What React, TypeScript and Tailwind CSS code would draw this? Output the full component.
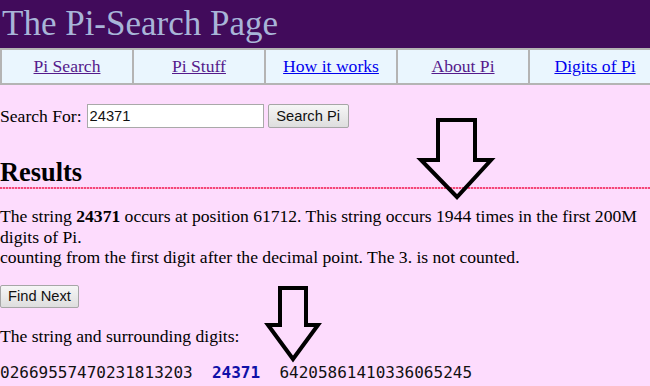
import React from 'react';

const NAV = [
  { label: 'Pi Search', visited: true },
  { label: 'Pi Stuff', visited: true },
  { label: 'How it works', visited: false },
  { label: 'About Pi', visited: true },
  { label: 'Digits of Pi', visited: false },
];

function DownArrow({ points }: { points: string }) {
  return (
    <svg className="absolute left-0 top-0 pointer-events-none" width="650" height="386" viewBox="0 0 650 386">
      <polygon points={points} fill="none" stroke="#000" strokeWidth={4} strokeLinejoin="miter" />
    </svg>
  );
}

export default function App() {
  return (
    <div className="relative w-full min-h-[386px] overflow-hidden bg-[#fddcfd] text-black font-['Liberation_Serif','Times_New_Roman',serif] text-[17.6px] leading-[1.15]">
      <header className="h-[48px] bg-[#410b5b]">
        <h1 className="pl-[2px] text-[35px] leading-[48px] font-normal text-[#a8b5d8]">The Pi-Search Page</h1>
      </header>

      <nav className="grid grid-cols-[132px_132px_132px_132px_132px] w-[660px] h-[37px] bg-[#eaf6fe] border-y-2 border-[#b4b4b4]">
        {NAV.map((item) => (
          <div key={item.label} className="flex items-center justify-center border-l-2 border-[#b4b4b4]">
            <a
              href="#"
              className={`underline ${item.visited ? 'text-[#551a8b]' : 'text-[#0000ee]'}`}
            >
              {item.label}
            </a>
          </div>
        ))}
      </nav>

      <form className="flex items-center mt-[19px] h-[24px]" onSubmit={(e) => e.preventDefault()}>
        <span className="mr-[5px]">Search For:</span>
        <input
          defaultValue="24371"
          className="w-[177px] h-[24px] px-[2px] bg-white border border-[#a9a9a9] font-['Liberation_Sans',Arial,sans-serif] text-[14.7px] text-[#111] outline-none"
        />
        <button
          type="submit"
          className="ml-[4px] w-[81px] h-[24px] rounded-[2px] border border-[#a6a6a6] bg-gradient-to-b from-[#f6f6f6] to-[#dedede] font-['Liberation_Sans',Arial,sans-serif] text-[14.7px] text-[#111]"
        >
          Search Pi
        </button>
      </form>

      <h2 className="mt-[29px] text-[26.4px] font-bold">Results</h2>
      <div className="h-[2px] bg-[repeating-linear-gradient(90deg,#f5457a_0px,#f5457a_2px,#fbb0cc_2px,#fbb0cc_3px)]" />

      <p className="mt-[17px] pr-[2px]">
        The string <b>24371</b> occurs at position 61712. This string occurs 1944 times in the first 200M digits of Pi.
        <br />
        counting from the first digit after the decimal point. The 3. is not counted.
      </p>

      <button className="mt-[18px] block w-[79px] h-[23px] rounded-[2px] border border-[#a6a6a6] bg-gradient-to-b from-[#f6f6f6] to-[#dedede] font-['Liberation_Sans',Arial,sans-serif] text-[14.7px] text-[#111]">
        Find Next
      </button>

      <p className="mt-[18px]">The string and surrounding digits:</p>

      <p className="mt-[18px] whitespace-pre font-['DejaVu_Sans_Mono',monospace] text-[16px] text-[#111]">
        02669557470231813203{'  '}<span className="text-[#1010a8] font-bold">24371</span>{' '}{' '}64205861410336065245
      </p>

      <DownArrow points="438,120 475,120 475,160 491,160 457,197 421,160 438,160" />
      <DownArrow points="280,288 306,288 306,325 318,325 293,359 268,325 280,325" />
    </div>
  );
}
